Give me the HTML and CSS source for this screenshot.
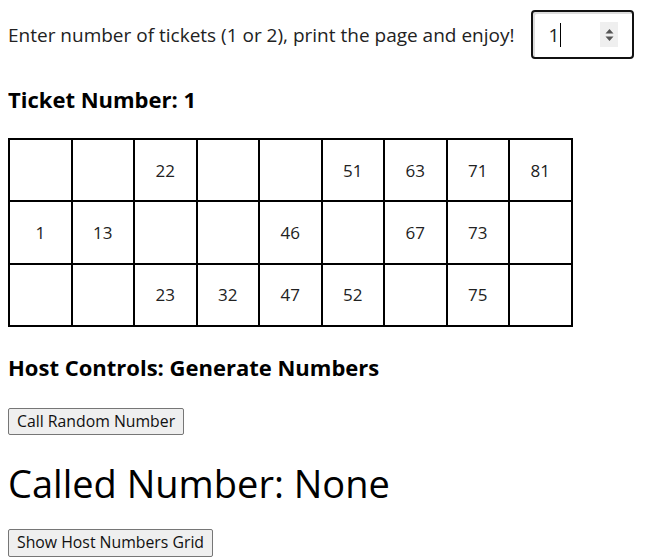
FILE: index.html
```html
<!DOCTYPE html>
<html lang="en">
<head>
<meta charset="utf-8">
<title>Housie Tickets</title>
<link rel="stylesheet" href="styles.css">
</head>
<body>
<div class="intro">
  <label class="intro-label" for="tickets">Enter number of tickets (1 or 2), print the page and enjoy!</label>
  <div class="num-input">
    <span class="num-value">1</span><span class="caret"></span>
    <span class="spinner">
      <svg width="11" height="16" viewBox="0 0 11 16"><path d="M1.5 6.5 L5.5 2 L9.5 6.5 Z M1.5 9.5 L5.5 14 L9.5 9.5 Z" fill="#555"/></svg>
    </span>
  </div>
</div>

<h3 class="heading ticket-heading">Ticket Number: 1</h3>

<div class="ticket">
  <div class="cell"></div><div class="cell"></div><div class="cell">22</div><div class="cell"></div><div class="cell"></div><div class="cell">51</div><div class="cell">63</div><div class="cell">71</div><div class="cell">81</div>
  <div class="cell">1</div><div class="cell">13</div><div class="cell"></div><div class="cell"></div><div class="cell">46</div><div class="cell"></div><div class="cell">67</div><div class="cell">73</div><div class="cell"></div>
  <div class="cell"></div><div class="cell"></div><div class="cell">23</div><div class="cell">32</div><div class="cell">47</div><div class="cell">52</div><div class="cell"></div><div class="cell">75</div><div class="cell"></div>
</div>

<h3 class="heading host-heading">Host Controls: Generate Numbers</h3>

<button class="btn btn-call" type="button">Call Random Number</button>

<div class="called">Called Number: None</div>

<button class="btn btn-grid" type="button">Show Host Numbers Grid</button>
</body>
</html>
```
FILE: styles.css
```css
html, body {
  background: #ffffff;
}
body {
  margin: 8px;
  font-family: "Open Sans", "Noto Sans", sans-serif;
  font-size: 16px;
  color: #1a1a1a;
}
.intro {
  display: flex;
  align-items: center;
  gap: 17px;
  margin-top: 2px;
  height: 49px;
}
.intro-label {
  font-size: 19px;
  color: #222;
}
.num-input {
  box-sizing: border-box;
  width: 103px;
  height: 49px;
  border: 2px solid #111;
  border-radius: 4px;
  display: flex;
  align-items: center;
  padding-left: 15px;
  position: relative;
  box-shadow: inset 2px 2px 0 #dcdcdc;
}
.num-value {
  font-size: 19px;
  color: #222;
}
.caret {
  display: inline-block;
  width: 1px;
  height: 24px;
  background: #000;
  margin-left: 1px;
}
.spinner {
  margin-left: auto;
  margin-right: 14px;
  width: 18px;
  height: 25px;
  background: #efefef;
  display: flex;
  align-items: center;
  justify-content: center;
}
.heading {
  font-size: 22px;
  font-weight: 700;
  color: #000;
  margin: 0;
  line-height: 26px;
}
.ticket-heading {
  margin-top: 27px;
}
.ticket {
  display: grid;
  grid-template-columns: repeat(9, 60.5px);
  grid-template-rows: repeat(3, 60.3px);
  gap: 2px;
  padding: 2px;
  background: #000;
  width: max-content;
  margin-top: 26px;
}
.cell {
  background: #fff;
  display: flex;
  align-items: center;
  justify-content: center;
  font-size: 17px;
  color: #222;
}
.host-heading {
  margin-top: 27px;
}
.btn {
  display: block;
  font-family: inherit;
  font-size: 15.8px;
  color: #111;
  background: #efefef;
  border: 1px solid #767676;
  border-radius: 2px;
  padding: 0 8px;
  height: 27px;
  line-height: 25px;
}
.btn-call {
  margin-top: 28px;
}
.called {
  font-size: 38px;
  color: #000;
  line-height: 50px;
  margin-top: 23px;
}
.btn-grid {
  margin-top: 21px;
  height: 28px;
}
```
